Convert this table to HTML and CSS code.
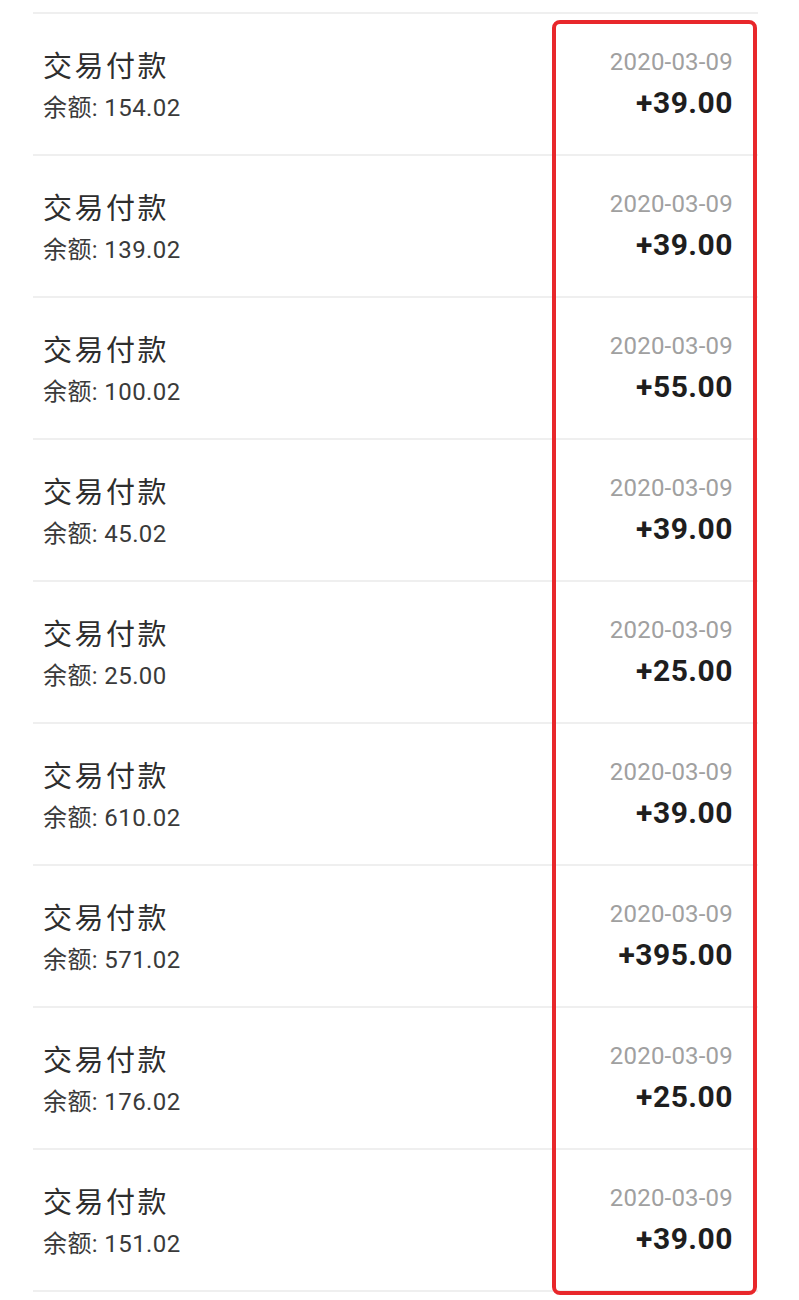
FILE: index.html
```html
<!DOCTYPE html>
<html lang="zh-CN">
<head>
<meta charset="utf-8">
<title>交易记录</title>
<link rel="stylesheet" href="styles.css">
</head>
<body>
<div class="page">
  <ul class="list">
    <li class="row"><div class="left"><div class="title">交易付款</div><div class="balance">余额: 154.02</div></div><div class="right"><div class="date">2020-03-09</div><div class="amount">+39.00</div></div></li>
    <li class="row"><div class="left"><div class="title">交易付款</div><div class="balance">余额: 139.02</div></div><div class="right"><div class="date">2020-03-09</div><div class="amount">+39.00</div></div></li>
    <li class="row"><div class="left"><div class="title">交易付款</div><div class="balance">余额: 100.02</div></div><div class="right"><div class="date">2020-03-09</div><div class="amount">+55.00</div></div></li>
    <li class="row"><div class="left"><div class="title">交易付款</div><div class="balance">余额: 45.02</div></div><div class="right"><div class="date">2020-03-09</div><div class="amount">+39.00</div></div></li>
    <li class="row"><div class="left"><div class="title">交易付款</div><div class="balance">余额: 25.00</div></div><div class="right"><div class="date">2020-03-09</div><div class="amount">+25.00</div></div></li>
    <li class="row"><div class="left"><div class="title">交易付款</div><div class="balance">余额: 610.02</div></div><div class="right"><div class="date">2020-03-09</div><div class="amount">+39.00</div></div></li>
    <li class="row"><div class="left"><div class="title">交易付款</div><div class="balance">余额: 571.02</div></div><div class="right"><div class="date">2020-03-09</div><div class="amount">+395.00</div></div></li>
    <li class="row"><div class="left"><div class="title">交易付款</div><div class="balance">余额: 176.02</div></div><div class="right"><div class="date">2020-03-09</div><div class="amount">+25.00</div></div></li>
    <li class="row"><div class="left"><div class="title">交易付款</div><div class="balance">余额: 151.02</div></div><div class="right"><div class="date">2020-03-09</div><div class="amount">+39.00</div></div></li>
  </ul>
  <div class="highlight"></div>
</div>
</body>
</html>
```
FILE: styles.css
```css
html, body {
  margin: 0;
  padding: 0;
  background: #ffffff;
}
body {
  font-family: Roboto, "Noto Sans CJK SC", sans-serif;
  color: #333;
}
.page {
  position: relative;
  padding-top: 12px;
  height: 1288px;
  overflow: hidden;
}
.list {
  list-style: none;
  margin: 0 0 0 33px;
  padding: 0;
  width: 725px;
  border-top: 2px solid #efefef;
}
.row {
  display: flex;
  justify-content: space-between;
  align-items: flex-start;
  height: 140px;
  border-bottom: 2px solid #efefef;
  padding: 0 25px 0 10px;
}
.left {
  padding-top: 35px;
}
.title {
  font-size: 29px;
  line-height: 36px;
  color: #2e2e2e;
  letter-spacing: 2.5px;
}
.balance {
  margin-top: 8px;
  font-size: 24px;
  line-height: 30px;
  color: #3a3a3a;
  letter-spacing: 0.4px;
}
.right {
  padding-top: 33px;
  text-align: right;
}
.date {
  font-size: 24px;
  line-height: 30px;
  color: #a0a0a0;
  letter-spacing: 0.2px;
}
.amount {
  margin-top: 8px;
  font-size: 30px;
  line-height: 36px;
  font-weight: 700;
  color: #1e1e1e;
  letter-spacing: 0.5px;
}
.highlight {
  position: absolute;
  left: 552px;
  top: 20px;
  width: 197px;
  height: 1267px;
  border: 4px solid #e8272b;
  border-radius: 8px;
}
```
